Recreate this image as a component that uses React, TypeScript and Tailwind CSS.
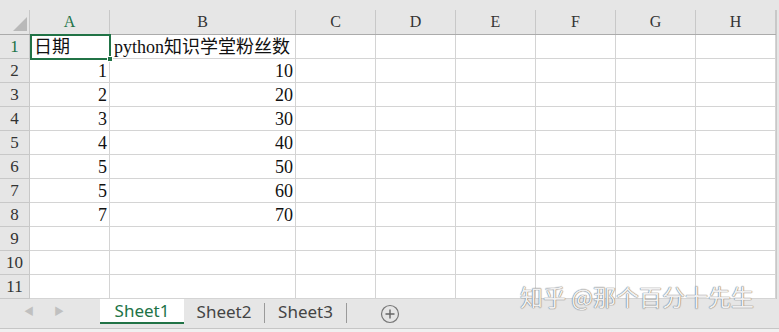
import React from "react";

const COLS = [
  { key: "A", w: "w-[80px]" },
  { key: "B", w: "w-[186px]" },
  { key: "C", w: "w-[80px]" },
  { key: "D", w: "w-[80px]" },
  { key: "E", w: "w-[80px]" },
  { key: "F", w: "w-[80px]" },
  { key: "G", w: "w-[80px]" },
  { key: "H", w: "w-[80px]" },
];

const DATA: Record<number, [string, string]> = {
  1: ["日期", "python知识学堂粉丝数"],
  2: ["1", "10"],
  3: ["2", "20"],
  4: ["3", "30"],
  5: ["4", "40"],
  6: ["5", "50"],
  7: ["5", "60"],
  8: ["7", "70"],
};

const serif = "font-['SimSun','Liberation_Serif','Noto_Sans_CJK_SC',serif]";

export default function App() {
  const rows = Array.from({ length: 11 }, (_, i) => i + 1);

  return (
    <div className="relative w-[779px] h-[332px] overflow-hidden bg-[#e6e6e6] text-[#222]">
      {/* column header */}
      <div className="flex h-[35px] border-b border-[#ababab] bg-[#e6e6e6]">
        <div className="relative w-[30px] shrink-0 border-r border-[#c8c8c8] mt-[10px]">
          <div className="absolute left-[13px] top-[7px] h-0 w-0 border-l-[14px] border-b-[14px] border-l-transparent border-b-[#b9b9b9]" />
        </div>
        {COLS.map((c) => (
          <div
            key={c.key}
            className={`${c.w} shrink-0 mt-[10px] border-r border-[#c8c8c8] flex items-center justify-center ${serif} text-[16px] ${
              c.key === "A" ? "text-[#217346]" : "text-[#333]"
            }`}
          >
            {c.key}
          </div>
        ))}
      </div>

      {/* rows */}
      {rows.map((r) => {
        const d = DATA[r];
        return (
          <div key={r} className="flex h-[24px]">
            <div
              className={`w-[30px] shrink-0 border-r border-b border-[#c8c8c8] bg-[#e6e6e6] flex items-center justify-center ${serif} text-[17px] ${
                r === 1 ? "text-[#217346]" : "text-[#333]"
              }`}
            >
              {r}
            </div>
            {COLS.map((c, ci) => {
              const val = d && ci < 2 ? d[ci] : "";
              const left = r === 1;
              return (
                <div
                  key={c.key}
                  className={`${c.w} shrink-0 bg-white border-r border-b border-[#d4d4d4] flex items-center ${
                    left ? "justify-start pl-[4px]" : "justify-end pr-[2px]"
                  } ${serif} text-[18px] leading-none whitespace-nowrap overflow-visible text-[#111]`}
                >
                  {val}
                </div>
              );
            })}
          </div>
        );
      })}

      {/* selection on A1 */}
      <div className="absolute left-[30px] top-[34px] w-[81px] h-[26px] border-2 border-[#217346] pointer-events-none" />
      <div className="absolute left-[107px] top-[56px] w-[6px] h-[6px] bg-[#217346] border border-white" />

      {/* sheet tab bar */}
      <div className="flex h-[29px] items-start bg-[#e6e6e6] font-['Microsoft_YaHei','Noto_Sans','Noto_Sans_CJK_SC',sans-serif]">
        <div className="w-[100px] h-[25px] flex items-center gap-[20px] pl-[24px] text-[#c0c0c0] text-[10px]">
          <span>◀</span>
          <span>▶</span>
        </div>
        <div className="w-[84px] h-[25px] bg-white border-b-2 border-[#217346] flex items-center justify-center text-[17px] text-[#217346]">
          Sheet1
        </div>
        <div className="w-[80px] h-[25px] flex items-center justify-center text-[17px] text-[#444]">
          Sheet2
        </div>
        <div className="w-px h-[20px] mt-[4px] bg-[#9a9a9a]" />
        <div className="w-[81px] h-[25px] flex items-center justify-center text-[17px] text-[#444]">
          Sheet3
        </div>
        <div className="w-px h-[20px] mt-[4px] bg-[#9a9a9a]" />
        <div className="w-[85px] h-[29px] flex items-center justify-center">
          <svg width="20" height="20" viewBox="0 0 20 20">
            <circle cx="10" cy="10" r="8.5" fill="none" stroke="#777" strokeWidth="1.2" />
            <path d="M10 5.5v9M5.5 10h9" stroke="#666" strokeWidth="1.4" />
          </svg>
        </div>
      </div>
      <div className="h-[4px] border-t border-[#c6c6c6] bg-[#f0f0f0]" />

      {/* right edge */}
      <div className="absolute right-0 top-[10px] bottom-[33px] w-[3px] bg-[#e6e6e6] border-l border-[#c8c8c8]" />

      {/* watermark */}
      <div className="absolute left-[520px] top-[285px] text-[23px] leading-none text-white/90 font-['Noto_Sans_CJK_SC',sans-serif] [text-shadow:0_0_1px_#666,0_0_1px_#666]">
        知乎 @那个百分十先生
      </div>
    </div>
  );
}
